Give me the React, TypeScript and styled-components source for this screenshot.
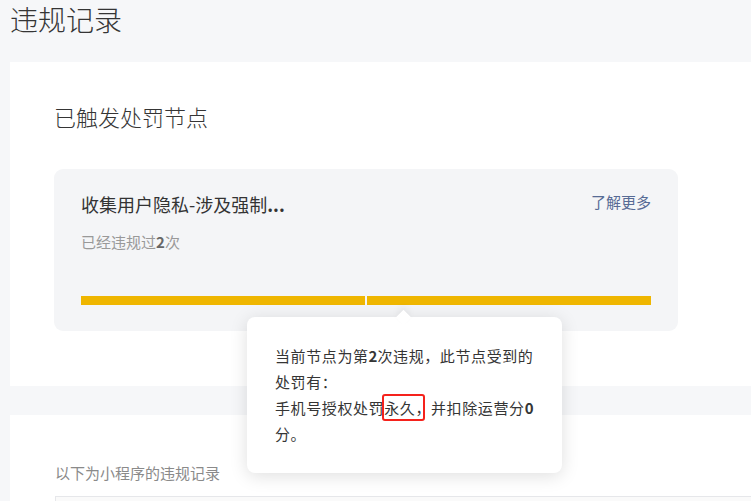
import React from 'react';
import styled, {createGlobalStyle} from 'styled-components';

const GlobalStyle = createGlobalStyle`
  html, body {
    margin: 0;
    padding: 0;
    overflow: hidden;
    background: #f6f7f9;
  }
  body {
    font-family: "Noto Sans CJK SC", "Liberation Sans", sans-serif;
    color: #353535;
  }
`;

const Page = styled.div`
  width: 800px;
  padding-left: 10px;
  box-sizing: border-box;
`;

const PageTitle = styled.h1`
  margin: 0 0 24px 0;
  font-size: 28px;
  line-height: 38px;
  font-weight: 300;
  color: #353535;
`;

const Panel = styled.section<{$pad: string}>`
  background: #fff;
  padding: ${({$pad}) => $pad};
  box-sizing: border-box;
`;

const SectionTitle = styled.h2`
  margin: 0 0 38px 0;
  font-size: 22px;
  line-height: 30px;
  font-weight: 300;
  color: #353535;
`;

const NodeCard = styled.div`
  position: relative;
  width: 624px;
  height: 162px;
  box-sizing: border-box;
  padding: 22px 27px 26px;
  background: #f4f5f7;
  border-radius: 9px;
  display: flex;
  flex-direction: column;
`;

const CardHead = styled.div`
  display: flex;
  justify-content: space-between;
  align-items: flex-start;
`;

const CardTitle = styled.div`
  font-size: 18px;
  line-height: 26px;
  font-weight: 400;
  color: #333;

  b {
    font-weight: 700;
  }
`;

const MoreLink = styled.a`
  font-size: 15px;
  line-height: 22px;
  color: #576b95;
  text-decoration: none;
  cursor: pointer;
`;

const CardSub = styled.div`
  margin-top: 14px;
  font-size: 15px;
  line-height: 22px;
  color: #999;

  b {
    color: #666;
    font-weight: 700;
  }
`;

const Bars = styled.div`
  margin-top: auto;
  display: flex;
  gap: 2px;
`;

const BarSegment = styled.div`
  flex: 1;
  height: 9px;
  background: #efb600;
`;

const Tooltip = styled.div`
  position: absolute;
  left: 193px;
  top: 148px;
  width: 315px;
  box-sizing: border-box;
  padding: 26px 28px 26px;
  background: #fff;
  border-radius: 8px;
  box-shadow: 0 3px 18px rgba(0, 0, 0, 0.13);
  font-size: 15px;
  line-height: 26px;
  letter-spacing: 0.6px;
  color: #353535;
  white-space: nowrap;
  z-index: 2;

  &::before {
    content: '';
    position: absolute;
    top: -5px;
    left: 151px;
    width: 11px;
    height: 11px;
    background: #fff;
    transform: rotate(45deg);
    box-shadow: -3px -3px 6px rgba(0, 0, 0, 0.05);
  }

  b {
    font-weight: 700;
    letter-spacing: 0;
  }
`;

const Marked = styled.span`
  position: relative;

  &::after {
    content: '';
    position: absolute;
    left: -2px;
    right: 6px;
    top: -3px;
    bottom: -3px;
    border: 2.5px solid #f5221c;
    border-radius: 3px;
  }
`;

const Hint = styled.div`
  font-size: 15px;
  line-height: 22px;
  color: #8a8a8a;
  margin-bottom: 12px;
`;

const RecordTable = styled.div`
  height: 60px;
  border: 1px solid #e6e7ea;
  border-right: none;
  background: #fafafa;
`;

export default function App() {
  return (
    <>
      <GlobalStyle />
      <Page>
        <PageTitle>违规记录</PageTitle>
        <Panel $pad="39px 0 55px 44px">
          <SectionTitle>已触发处罚节点</SectionTitle>
          <NodeCard>
            <CardHead>
              <CardTitle>收集用户隐私-涉及强制<b>...</b></CardTitle>
              <MoreLink>了解更多</MoreLink>
            </CardHead>
            <CardSub>已经违规过<b>2</b>次</CardSub>
            <Bars>
              <BarSegment />
              <BarSegment />
            </Bars>
            <Tooltip>
              当前节点为第<b>2</b>次违规，此节点受到的<br />
              处罚有：<br />
              手机号授权处罚<Marked>永久，</Marked>并扣除运营分<b>0</b><br />
              分。
            </Tooltip>
          </NodeCard>
        </Panel>
        <Panel $pad="47px 0 0 45px" style={{marginTop: 29}}>
          <Hint>以下为小程序的违规记录</Hint>
          <RecordTable />
        </Panel>
      </Page>
    </>
  );
}
